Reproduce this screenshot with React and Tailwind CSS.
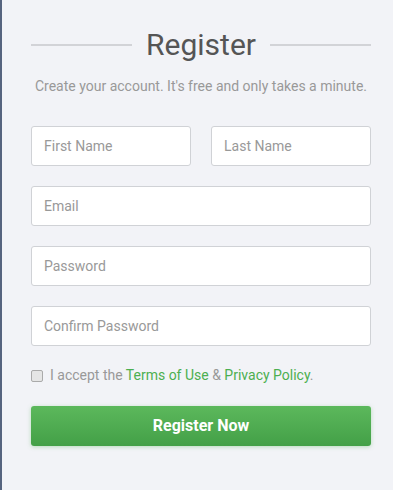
import React from "react";

const font = { fontFamily: "Roboto, 'Liberation Sans', sans-serif" };

function Field({ placeholder, type = "text", className = "" }) {
  return (
    <input
      type={type}
      placeholder={placeholder}
      className={`h-10 w-full rounded-[3px] border border-[#d0d2d6] bg-white px-3 text-[14px] text-[#555] placeholder:text-[#999] outline-none ${className}`}
    />
  );
}

export default function App() {
  return (
    <div
      className="min-h-[490px] w-[393px] border-l-2 border-[#56647f] bg-[#f2f3f7] pl-[29px]"
      style={font}
    >
      <div className="w-[340px] pt-[27px]">
        <div className="flex items-center gap-[14px]">
          <div className="h-[2px] flex-1 bg-[#d2d3d7]" />
          <h2 className="text-[30px] leading-9 text-[#555]">Register</h2>
          <div className="h-[2px] flex-1 bg-[#d2d3d7]" />
        </div>
        <p className="mt-[13px] text-center text-[14px] text-[#999]">
          Create your account. It's free and only takes a minute.
        </p>

        <form className="mt-[29px] flex flex-col gap-5">
          <div className="flex gap-5">
            <Field placeholder="First Name" />
            <Field placeholder="Last Name" />
          </div>
          <Field placeholder="Email" type="email" />
          <Field placeholder="Password" type="password" />
          <Field placeholder="Confirm Password" type="password" />

          <label className="-mt-[1px] flex items-center gap-[7px] text-[14px] text-[#999]">
            <span className="h-3 w-3 rounded-[2px] border border-[#aaa] bg-[#e5e5e5]" />
            <span>
              I accept the <a className="text-[#4caf50]">Terms of Use</a> &amp;{" "}
              <a className="text-[#4caf50]">Privacy Policy</a>.
            </span>
          </label>

          <button
            type="button"
            className="h-10 w-full rounded-[3px] bg-gradient-to-b from-[#5cb85c] to-[#43a047] text-[16px] font-bold text-white shadow-[0_1px_4px_rgba(76,175,80,0.35)]"
          >
            Register Now
          </button>
        </form>
      </div>
    </div>
  );
}
